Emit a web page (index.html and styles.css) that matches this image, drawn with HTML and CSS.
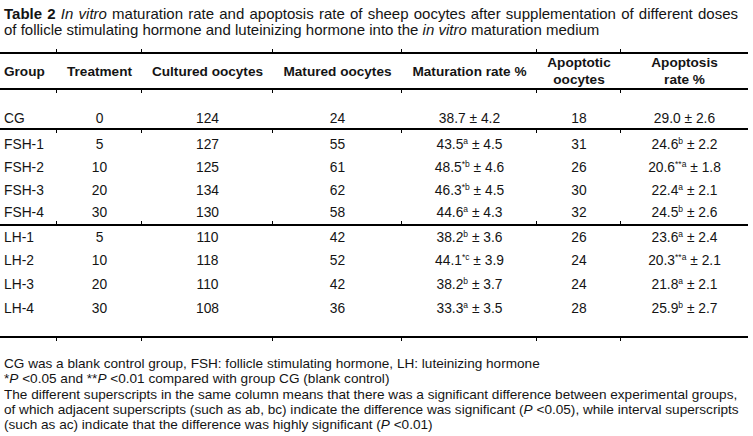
FILE: index.html
```html
<!DOCTYPE html>
<html>
<head>
<meta charset="utf-8">
<link rel="stylesheet" href="styles.css">
</head>
<body>
<div class="page">
  <p class="caption"><span class="cap-line1"><b>Table 2</b> <i>In vitro</i> maturation rate and apoptosis rate of sheep oocytes after supplementation of different doses</span><span class="cap-line2">of follicle stimulating hormone and luteinizing hormone into the <i>in vitro</i> maturation medium</span></p>
  <table class="data">
    <colgroup>
      <col class="c1"><col class="c2"><col class="c3"><col class="c4"><col class="c5"><col class="c6"><col class="c7">
    </colgroup>
    <thead>
      <tr>
        <th class="left">Group</th>
        <th>Treatment</th>
        <th>Cultured oocytes</th>
        <th>Matured oocytes</th>
        <th>Maturation rate %</th>
        <th>Apoptotic<br>oocytes</th>
        <th>Apoptosis<br>rate %</th>
      </tr>
    </thead>
    <tbody class="cg">
      <tr><td class="left">CG</td><td>0</td><td>124</td><td>24</td><td>38.7 ± 4.2</td><td>18</td><td>29.0 ± 2.6</td></tr>
    </tbody>
    <tbody class="fsh">
      <tr><td class="left">FSH-1</td><td>5</td><td>127</td><td>55</td><td>43.5<sup>a</sup> ± 4.5</td><td>31</td><td>24.6<sup>b</sup> ± 2.2</td></tr>
      <tr><td class="left">FSH-2</td><td>10</td><td>125</td><td>61</td><td>48.5<sup>*b</sup> ± 4.6</td><td>26</td><td>20.6<sup>**a</sup> ± 1.8</td></tr>
      <tr><td class="left">FSH-3</td><td>20</td><td>134</td><td>62</td><td>46.3<sup>*b</sup> ± 4.5</td><td>30</td><td>22.4<sup>a</sup> ± 2.1</td></tr>
      <tr><td class="left">FSH-4</td><td>30</td><td>130</td><td>58</td><td>44.6<sup>a</sup> ± 4.3</td><td>32</td><td>24.5<sup>b</sup> ± 2.6</td></tr>
    </tbody>
    <tbody class="lh">
      <tr><td class="left">LH-1</td><td>5</td><td>110</td><td>42</td><td>38.2<sup>b</sup> ± 3.6</td><td>26</td><td>23.6<sup>a</sup> ± 2.4</td></tr>
      <tr><td class="left">LH-2</td><td>10</td><td>118</td><td>52</td><td>44.1<sup>*c</sup> ± 3.9</td><td>24</td><td>20.3<sup>**a</sup> ± 2.1</td></tr>
      <tr><td class="left">LH-3</td><td>20</td><td>110</td><td>42</td><td>38.2<sup>b</sup> ± 3.7</td><td>24</td><td>21.8<sup>a</sup> ± 2.1</td></tr>
      <tr><td class="left">LH-4</td><td>30</td><td>108</td><td>36</td><td>33.3<sup>a</sup> ± 3.5</td><td>28</td><td>25.9<sup>b</sup> ± 2.7</td></tr>
    </tbody>
  </table>
  <div class="notes">
    <p>CG was a blank control group, FSH: follicle stimulating hormone, LH: luteinizing hormone</p>
    <p>*<i>P</i> &lt;0.05 and **<i>P</i> &lt;0.01 compared with group CG (blank control)</p>
    <p>The different superscripts in the same column means that there was a significant difference between experimental groups,<br>of which adjacent superscripts (such as ab, bc) indicate the difference was significant (<i>P</i> &lt;0.05), while interval superscripts<br>(such as ac) indicate that the difference was highly significant (<i>P</i> &lt;0.01)</p>
  </div>
</div>
</body>
</html>
```
FILE: styles.css
```css
* { box-sizing: border-box; }
html, body { margin: 0; padding: 0; background: #fff; }
body {
  font-family: "Liberation Sans", Arial, sans-serif;
  color: #141414;
  font-size: 13px;
}
.page { width: 753px; height: 436px; overflow: hidden; }
.caption {
  margin: 0;
  padding: 6px 15px 0 4px;
  line-height: 16px;
  font-size: 15px;
}
.cap-line1 {
  display: block;
  text-align: justify;
  text-align-last: justify;
}
.cap-line2 { display: block; }
.data {
  margin-top: 14px;
  width: 748px;
  border-collapse: collapse;
  font-size: 13.8px;
}
.c1 { width: 57px; } .c2 { width: 85px; } .c3 { width: 131px; }
.c4 { width: 129px; } .c5 { width: 135px; } .c6 { width: 84px; } .c7 { width: 127px; }
.data th, .data td {
  text-align: center;
  padding: 0;
  position: relative;
}
.data .left { text-align: left; padding-left: 4px; }
.data thead tr { height: 35px; border-top: 2px solid #000; border-bottom: 2px solid #000; }
.data th { font-weight: bold; font-size: 13.6px; line-height: 17px; vertical-align: middle; }
.data tbody.cg td { height: 40px; padding-top: 20px; line-height: 18px; }
.data tbody.cg tr { border-bottom: 2px solid #000; }
.data tbody.fsh tr { border-bottom: 2px solid #000; }
.data tbody.fsh tr:not(:last-child) { border-bottom: 0; }
.data tbody.fsh td { height: 23px; line-height: 18px; }
.data tbody.fsh tr:first-child td { height: 27px; padding-top: 4px; }
.data tbody.lh td { height: 24px; line-height: 18px; }
.data tbody.lh tr:last-child { border-bottom: 2px solid #000; }
.data tbody.lh tr:last-child td { height: 40px; padding-bottom: 16px; }
sup { font-size: 8.5px; vertical-align: 5px; line-height: 0; }

/* tiny column tick marks on the rules */
.data th + th::before, .data th + th::after,
.data tbody.cg td + td::after,
.data tbody.fsh tr:last-child td + td::after,
.data tbody.lh tr:last-child td + td::after,
.data tbody.lh tr:first-child td + td::before {
  content: "";
  position: absolute;
  left: -1px;
  width: 1px;
  height: 3px;
  background: #000;
}
.data th + th::before { top: -5px; }
.data th + th::after { bottom: -5px; }
.data tbody.cg td + td::after { bottom: -5px; }
.data tbody.fsh tr:last-child td + td::after { bottom: -1px; height: 3px; }
.data tbody.lh tr:first-child td + td::before { top: -5px; }
.data tbody.lh tr:last-child td + td::after { bottom: -5px; }

.notes { margin-top: 18px; padding-left: 4px; padding-right: 0; }
.notes p { margin: 0; line-height: 15.3px; font-size: 13.6px; white-space: nowrap; }
```
